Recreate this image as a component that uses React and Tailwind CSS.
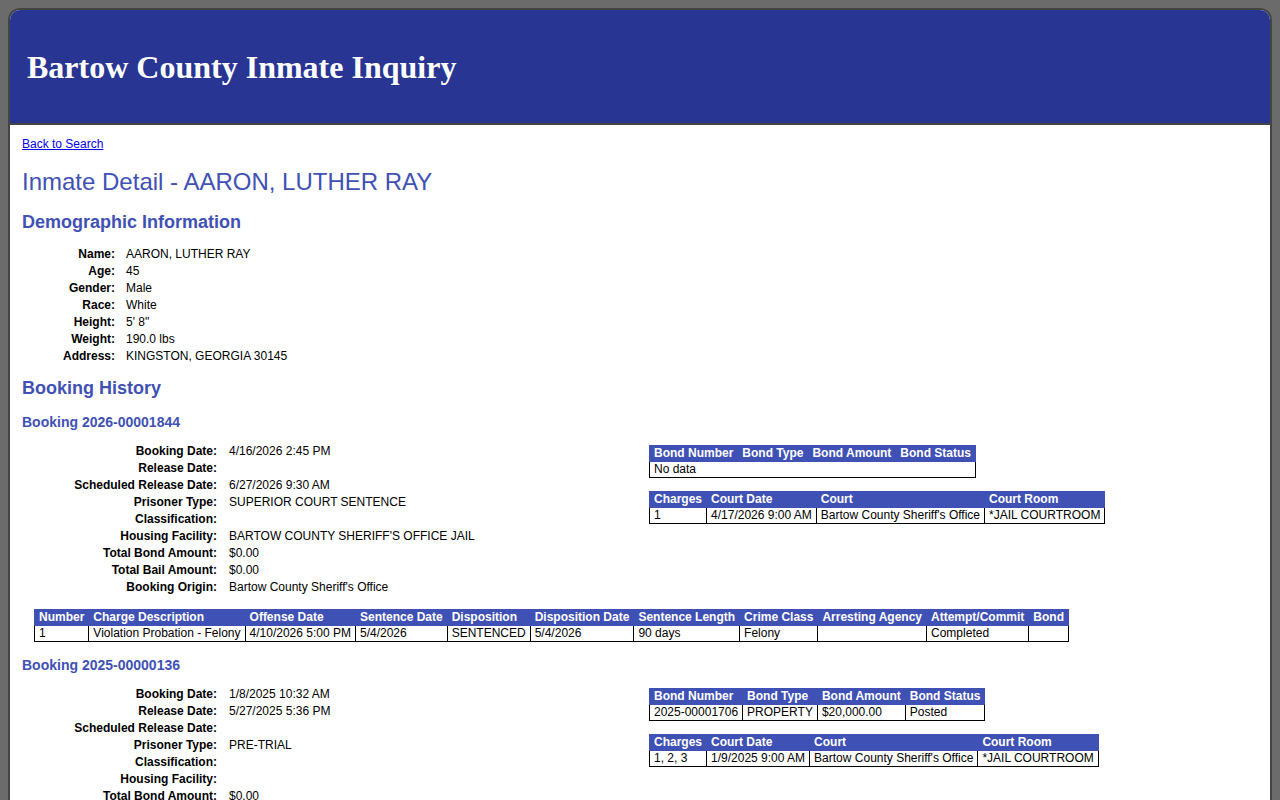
import React from 'react';

const demographics = [
  ['Name:', 'AARON, LUTHER RAY'],
  ['Age:', '45'],
  ['Gender:', 'Male'],
  ['Race:', 'White'],
  ['Height:', '5\' 8"'],
  ['Weight:', '190.0 lbs'],
  ['Address:', 'KINGSTON, GEORGIA 30145'],
];

const bookings = [
  {
    id: '2026-00001844',
    info: [
      ['Booking Date:', '4/16/2026 2:45 PM'],
      ['Release Date:', ''],
      ['Scheduled Release Date:', '6/27/2026 9:30 AM'],
      ['Prisoner Type:', 'SUPERIOR COURT SENTENCE'],
      ['Classification:', ''],
      ['Housing Facility:', "BARTOW COUNTY SHERIFF'S OFFICE JAIL"],
      ['Total Bond Amount:', '$0.00'],
      ['Total Bail Amount:', '$0.00'],
      ['Booking Origin:', "Bartow County Sheriff's Office"],
    ],
    bonds: [],
    courts: [['1', '4/17/2026 9:00 AM', "Bartow County Sheriff's Office", '*JAIL COURTROOM']],
    charges: [
      ['1', 'Violation Probation - Felony', '4/10/2026 5:00 PM', '5/4/2026', 'SENTENCED', '5/4/2026', '90 days', 'Felony', '', 'Completed', ''],
    ],
  },
  {
    id: '2025-00000136',
    info: [
      ['Booking Date:', '1/8/2025 10:32 AM'],
      ['Release Date:', '5/27/2025 5:36 PM'],
      ['Scheduled Release Date:', ''],
      ['Prisoner Type:', 'PRE-TRIAL'],
      ['Classification:', ''],
      ['Housing Facility:', ''],
      ['Total Bond Amount:', '$0.00'],
      ['Total Bail Amount:', '$20,000.00'],
      ['Booking Origin:', "Bartow County Sheriff's Office"],
    ],
    bonds: [['2025-00001706', 'PROPERTY', '$20,000.00', 'Posted']],
    courts: [['1, 2, 3', '1/9/2025 9:00 AM', "Bartow County Sheriff's Office", '*JAIL COURTROOM']],
    charges: [],
  },
];

const chargeCols = ['Number', 'Charge Description', 'Offense Date', 'Sentence Date', 'Disposition', 'Disposition Date', 'Sentence Length', 'Crime Class', 'Arresting Agency', 'Attempt/Commit', 'Bond'];

const DataTable = ({ cols, rows, className = '' }) => (
  <table className={`border-collapse text-[12px] leading-[15px] text-black ${className}`}>
    <thead>
      <tr className="bg-[#3f51b5]">
        {cols.map((c) => (
          <th key={c} className="border border-[#3f51b5] px-1 text-left font-bold text-white whitespace-nowrap">{c}</th>
        ))}
      </tr>
    </thead>
    <tbody>
      {rows.length === 0 ? (
        <tr>
          <td colSpan={cols.length} className="border border-black px-1">No data</td>
        </tr>
      ) : (
        rows.map((r, i) => (
          <tr key={i}>
            {r.map((v, j) => (
              <td key={j} className="border border-black px-1 whitespace-nowrap">{v}</td>
            ))}
          </tr>
        ))
      )}
    </tbody>
  </table>
);

const Booking = ({ b }) => (
  <div>
    <h4 className="mt-[15px] text-[14px] leading-[17px] font-bold text-[#3f51b5]">Booking {b.id}</h4>
    <div className="mt-[11px] flex">
      <div className="w-[627px] shrink-0">
        {b.info.map(([k, v]) => (
          <div key={k} className="flex h-[17px] items-center text-[12px]">
            <span className="w-[195px] text-right font-bold">{k}</span>
            <span className="pl-[12px]">{v}</span>
          </div>
        ))}
      </div>
      <div className="mt-[3px] flex flex-col items-start gap-[13px]">
        <DataTable cols={['Bond Number', 'Bond Type', 'Bond Amount', 'Bond Status']} rows={b.bonds} />
        <DataTable cols={['Charges', 'Court Date', 'Court', 'Court Room']} rows={b.courts} />
      </div>
    </div>
    {b.charges.length > 0 && (
      <DataTable cols={chargeCols} rows={b.charges} className="ml-3 mt-[14px]" />
    )}
  </div>
);

export default function App() {
  return (
    <div className="min-h-screen bg-[#6b6b6b] px-2 pt-2" style={{ fontFamily: '"Liberation Sans", Arial, sans-serif' }}>
      <div className="overflow-hidden rounded-t-[12px] border-2 border-b-0 border-[#444444] bg-white">
        <div className="flex h-[115px] items-center border-b-2 border-[#444444] bg-[#283593] px-[17px]">
          <h1 className="text-[32px] leading-[36px] font-bold text-white" style={{ fontFamily: '"Liberation Serif", "Times New Roman", serif' }}>
            Bartow County Inmate Inquiry
          </h1>
        </div>
        <div className="px-3 pt-[12px] pb-10 text-black">
          <a href="#" className="block text-[12px] leading-[14px] text-[#0000ee] underline">Back to Search</a>
          <h2 className="mt-[17px] text-[24px] leading-[28px] text-[#3f51b5]">Inmate Detail - AARON, LUTHER RAY</h2>
          <h3 className="mt-[15px] text-[18px] leading-[22px] font-bold text-[#3f51b5]">Demographic Information</h3>
          <div className="mt-[12px]">
            {demographics.map(([k, v]) => (
              <div key={k} className="flex h-[17px] items-center text-[12px]">
                <span className="w-[93px] text-right font-bold">{k}</span>
                <span className="pl-[11px]">{v}</span>
              </div>
            ))}
          </div>
          <h3 className="mt-[13px] text-[18px] leading-[22px] font-bold text-[#3f51b5]">Booking History</h3>
          {bookings.map((b) => (
            <Booking key={b.id} b={b} />
          ))}
        </div>
      </div>
    </div>
  );
}
